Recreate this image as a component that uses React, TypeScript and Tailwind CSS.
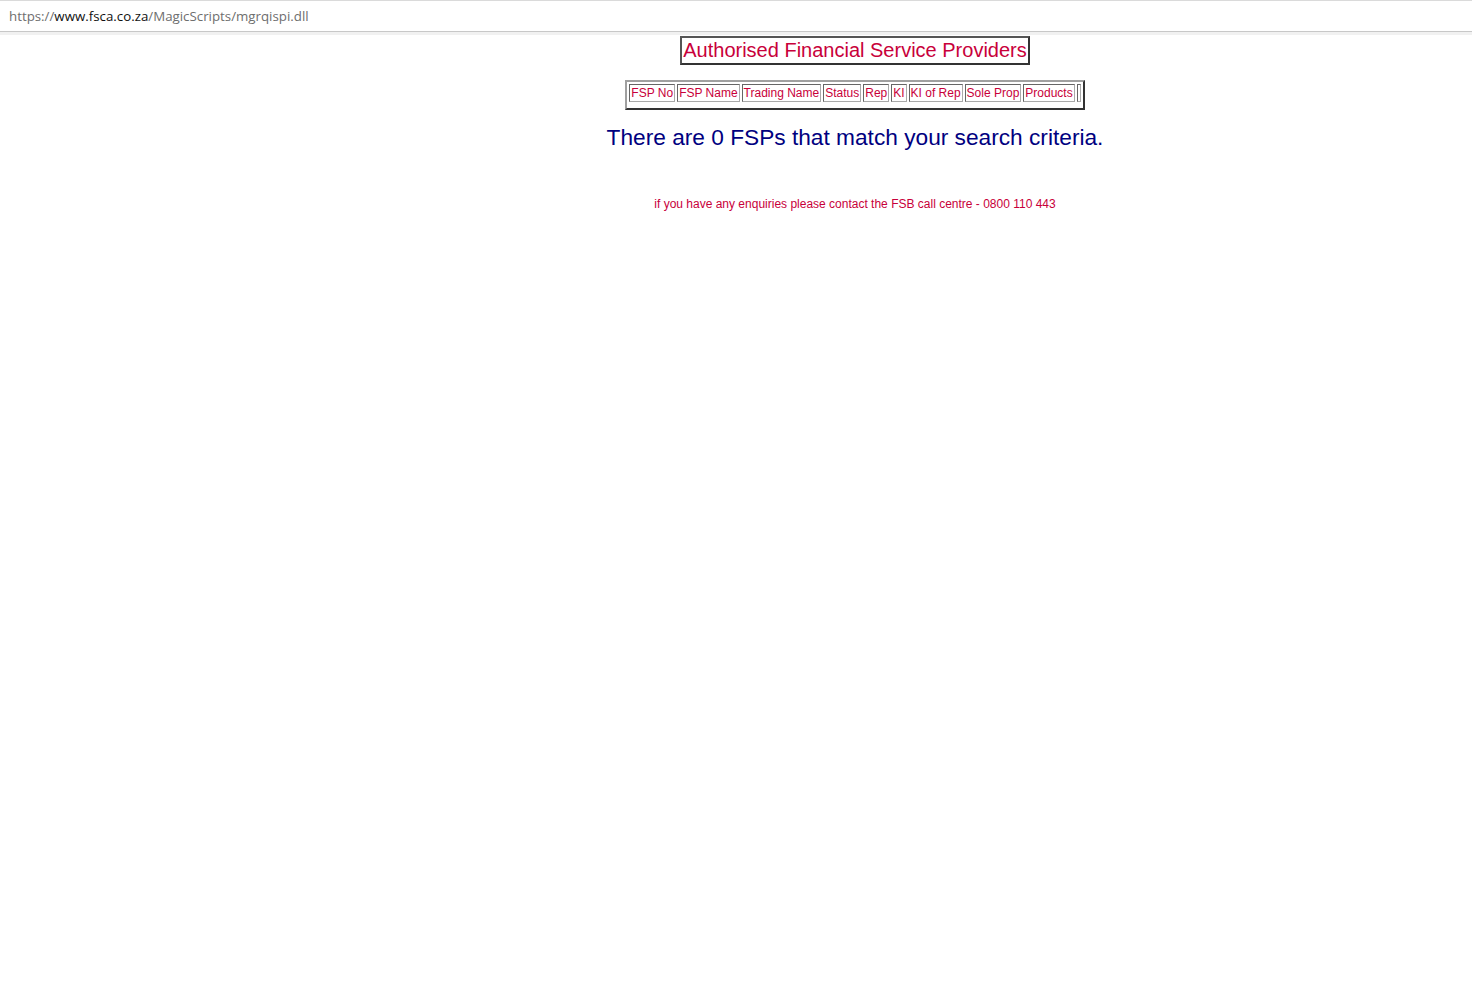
import React from "react";

const cols = ["FSP No", "FSP Name", "Trading Name", "Status", "Rep", "KI", "KI of Rep", "Sole Prop", "Products"];

export default function App() {
  return (
    <div className="min-h-[998px] bg-white" style={{ fontFamily: "Arial, 'Liberation Sans', sans-serif" }}>
      <div className="h-[32px] border-t border-b border-t-[#dadada] border-b-[#c8c8c8] bg-white flex items-center pl-[9px] pt-[2px]">
        <span className="text-[13.3px] text-[#6e6e6e]" style={{ fontFamily: "'Open Sans', 'Noto Sans', sans-serif" }}>
          https://<span className="text-[#111]">www.fsca.co.za</span>/MagicScripts/mgrqispi.dll
        </span>
      </div>
      <div className="h-[3px] bg-[#f1f1f1]"></div>
      <div className="pl-[238px] flex flex-col items-center">
        <div className="mt-px border-2 border-solid border-t-[#555] border-l-[#555] border-r-[#333] border-b-[#333] px-px py-px text-[20px] leading-[23px] text-[#c8003a]">
          Authorised Financial Service Providers
        </div>
        <div className="mt-[15px] border-2 border-solid border-t-[#a0a0a0] border-l-[#a0a0a0] border-r-[#333] border-b-[#333] pt-[2px] pl-[2px] pr-[2px] pb-[6px] flex gap-[2px]">
          {cols.map((c) => (
            <div key={c} className="border border-solid border-t-[#666] border-l-[#666] border-r-[#aaa] border-b-[#aaa] px-px py-px text-[12px] leading-[14px] text-[#c8003a] whitespace-nowrap">
              {c}
            </div>
          ))}
          <div className="border border-solid border-t-[#666] border-l-[#666] border-r-[#aaa] border-b-[#aaa] w-[4px] h-[18px]"></div>
        </div>
        <div className="mt-[12px] text-[22.7px] leading-[30px] text-[#000080]">
          There are 0 FSPs that match your search criteria.
        </div>
        <div className="mt-[45px] text-[12px] leading-[14px] text-[#c8003a]">
          if you have any enquiries please contact the FSB call centre - 0800 110 443
        </div>
      </div>
    </div>
  );
}
